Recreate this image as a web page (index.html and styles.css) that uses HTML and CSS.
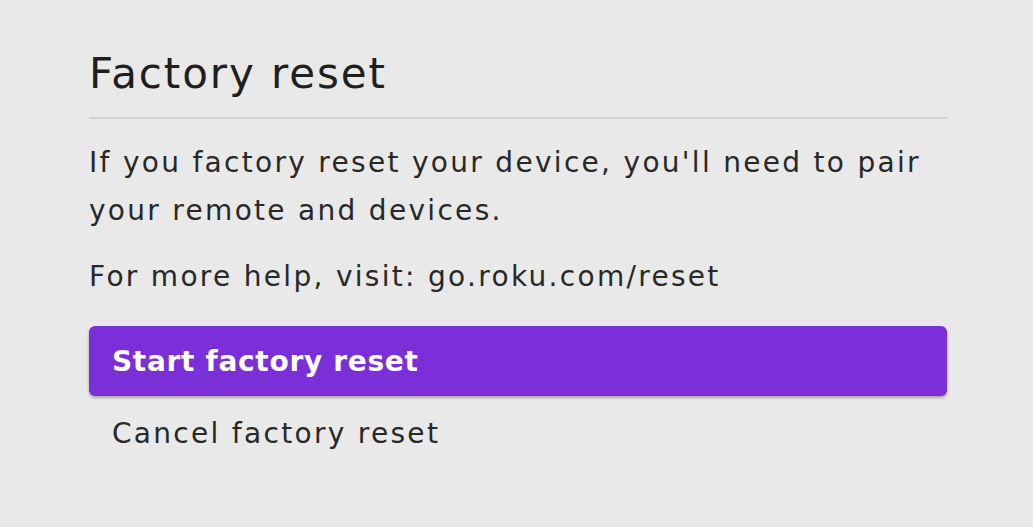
FILE: index.html
```html
<!DOCTYPE html>
<html>
<head>
<meta charset="utf-8">
<link rel="stylesheet" href="styles.css">
</head>
<body>
<main class="panel">
  <h1 class="title">Factory reset</h1>
  <hr class="divider">
  <p class="text">If you factory reset your device, you'll need to pair your remote and devices.</p>
  <p class="text help">For more help, visit: go.roku.com/reset</p>
  <div class="options">
    <div class="option selected">Start factory reset</div>
    <div class="option">Cancel factory reset</div>
  </div>
</main>
</body>
</html>
```
FILE: styles.css
```css
html, body {
  margin: 0;
  padding: 0;
  background: #e9e9e9;
  width: 1033px;
  height: 527px;
  overflow: hidden;
}
body {
  font-family: "DejaVu Sans", sans-serif;
  color: #282828;
}
.panel {
  width: 858px;
  padding: 46px 0 0 89px;
}
.title {
  margin: 0;
  font-size: 42px;
  font-weight: 400;
  line-height: 56px;
  letter-spacing: 1.9px;
  color: #1f1f1f;
}
.divider {
  border: 0;
  height: 2px;
  background: #cfcfcf;
  margin: 15px 0 20px;
}
.text {
  margin: 0;
  font-size: 28px;
  line-height: 48px;
  letter-spacing: 2.3px;
}
.help {
  margin-top: 18px;
}
.options {
  margin-top: 25px;
  display: flex;
  flex-direction: column;
}
.option {
  height: 70px;
  padding: 0 23px;
  display: flex;
  align-items: center;
  font-size: 28px;
  letter-spacing: 2.3px;
  border-radius: 6px;
}
.option + .option {
  padding-top: 2px;
}
.selected {
  background: #7b2fd9;
  color: #fff;
  font-weight: 700;
  letter-spacing: 0.7px;
  box-shadow: 0 2px 3px rgba(0,0,0,0.3);
}
```
